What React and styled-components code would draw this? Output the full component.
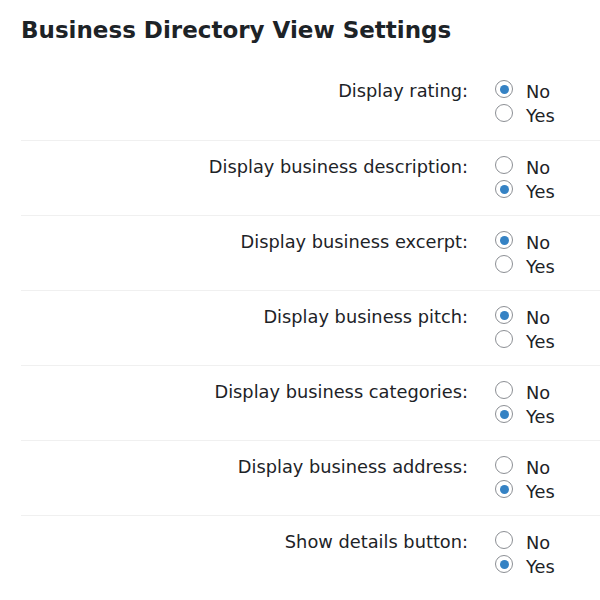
import React, { useState } from 'react';
import styled, { createGlobalStyle } from 'styled-components';

const GlobalStyle = createGlobalStyle`
  html, body {
    margin: 0;
    padding: 0;
    background: #ffffff;
  }
  body {
    font-family: "DejaVu Sans", Verdana, sans-serif;
    color: #1d2327;
    overflow: hidden;
  }
`;

const settings = [
    { key: 'rating', label: 'Display rating:', value: 'no' },
    { key: 'description', label: 'Display business description:', value: 'yes' },
    { key: 'excerpt', label: 'Display business excerpt:', value: 'no' },
    { key: 'pitch', label: 'Display business pitch:', value: 'no' },
    { key: 'categories', label: 'Display business categories:', value: 'yes' },
    { key: 'address', label: 'Display business address:', value: 'yes' },
    { key: 'details', label: 'Show details button:', value: 'yes' },
];

const App = () => {
    const [values, setValues] = useState(
        Object.fromEntries(settings.map((s) => [s.key, s.value]))
    );

    const choose = (key, value) => setValues((v) => ({ ...v, [key]: value }));

    return (
        <>
            <GlobalStyle />
            <Wrap>
                <Title>Business Directory View Settings</Title>
                <Table>
                    {settings.map((s) => (
                        <Row key={s.key}>
                            <Label>{s.label}</Label>
                            <Options>
                                {['no', 'yes'].map((opt) => (
                                    <Option key={opt}>
                                        <Radio
                                            type="radio"
                                            name={s.key}
                                            checked={values[s.key] === opt}
                                            onChange={() => choose(s.key, opt)}
                                        />
                                        {opt === 'no' ? 'No' : 'Yes'}
                                    </Option>
                                ))}
                            </Options>
                        </Row>
                    ))}
                </Table>
            </Wrap>
        </>
    );
};

export default App;

const Wrap = styled.div`
  padding-left: 21px;
  width: 579px;
`;

const Title = styled.h1`
  margin: 0;
  padding-top: 15px;
  height: 65px;
  box-sizing: border-box;
  font-size: 23px;
  font-weight: bold;
  line-height: 30px;
  color: #1d2327;
`;

const Table = styled.div`
  display: flex;
  flex-direction: column;
`;

const Row = styled.div`
  display: grid;
  grid-template-columns: 447px 1fr;
  column-gap: 27px;
  height: 75px;
  box-sizing: border-box;
  & + & {
    border-top: 1px solid #f0f0f0;
  }
`;

const Label = styled.div`
  text-align: right;
  font-size: 17.8px;
  line-height: 24px;
  padding-top: 14px;
  white-space: nowrap;
`;

const Options = styled.div`
  display: flex;
  flex-direction: column;
  padding-top: 15px;
`;

const Option = styled.label`
  display: flex;
  align-items: flex-start;
  gap: 13px;
  font-size: 17.8px;
  line-height: 24px;
`;

const Radio = styled.input`
  appearance: none;
  margin: 0;
  width: 18px;
  height: 18px;
  flex: none;
  border: 1px solid #8c8f94;
  border-radius: 50%;
  background: #fff;
  box-sizing: border-box;
  display: grid;
  place-items: center;
  &:checked::before {
    content: '';
    width: 9px;
    height: 9px;
    border-radius: 50%;
    background: #3582c4;
  }
`;
